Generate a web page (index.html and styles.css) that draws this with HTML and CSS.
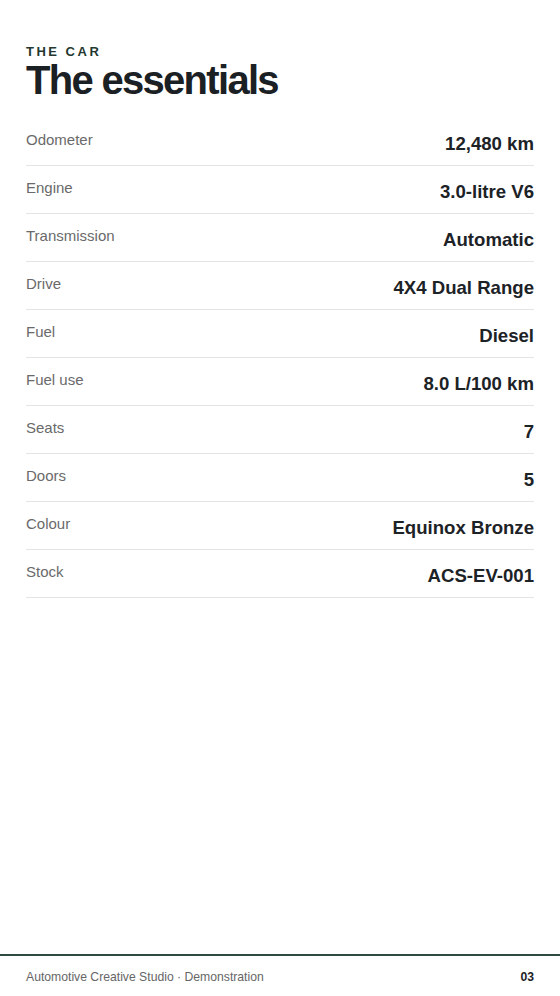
FILE: index.html
```html
<!DOCTYPE html>
<html lang="en">
<head>
    <meta charset="UTF-8">
    <meta name="viewport" content="width=device-width, initial-scale=1.0">
    <title>The essentials</title>
    <link rel="stylesheet" href="styles.css">
</head>
<body>
    <div class="page">
        <main class="content">
            <div class="kicker">The car</div>
            <h1>The essentials</h1>
            <div class="specs">
                <div class="row"><span class="label">Odometer</span><span class="value">12,480 km</span></div>
                <div class="row"><span class="label">Engine</span><span class="value">3.0-litre V6</span></div>
                <div class="row"><span class="label">Transmission</span><span class="value">Automatic</span></div>
                <div class="row"><span class="label">Drive</span><span class="value">4X4 Dual Range</span></div>
                <div class="row"><span class="label">Fuel</span><span class="value">Diesel</span></div>
                <div class="row"><span class="label">Fuel use</span><span class="value">8.0 L/100 km</span></div>
                <div class="row"><span class="label">Seats</span><span class="value">7</span></div>
                <div class="row"><span class="label">Doors</span><span class="value">5</span></div>
                <div class="row"><span class="label">Colour</span><span class="value">Equinox Bronze</span></div>
                <div class="row"><span class="label">Stock</span><span class="value">ACS-EV-001</span></div>
            </div>
        </main>
        <footer class="footer">
            <span>Automotive Creative Studio · Demonstration</span>
            <span class="page-no">03</span>
        </footer>
    </div>
</body>
</html>
```

FILE: styles.css
```css
body {
    margin: 0;
    background: #fff;
    font-family: 'Liberation Sans', Arial, sans-serif;
    color: #1c2226;
}
.page {
    min-height: 100vh;
    display: flex;
    flex-direction: column;
}
.content {
    flex: 1;
    padding: 44px 26px 0;
}
.kicker {
    font-size: 13px;
    line-height: 1.2;
    font-weight: 700;
    letter-spacing: 2.5px;
    text-transform: uppercase;
    color: #24382f;
}
h1 {
    margin: 0 0 18px;
    font-size: 40px;
    line-height: 40px;
    font-weight: 700;
    letter-spacing: -1.7px;
    color: #1a2024;
}
.row {
    display: flex;
    justify-content: space-between;
    align-items: flex-start;
    padding: 12px 0 10px;
    border-bottom: 1px solid #e4e4e4;
}
.label {
    font-size: 15px;
    line-height: 20px;
    color: #6a6a6a;
}
.value {
    margin-top: 3px;
    font-size: 18.6px;
    line-height: 22px;
    font-weight: 700;
    color: #1c2226;
}
.footer {
    display: flex;
    justify-content: space-between;
    padding: 14px 26px 12px;
    border-top: 2px solid #2f4a3e;
    font-size: 12.2px;
    line-height: 14px;
    color: #666;
}
.page-no {
    font-weight: 700;
    color: #1c2226;
}
```
